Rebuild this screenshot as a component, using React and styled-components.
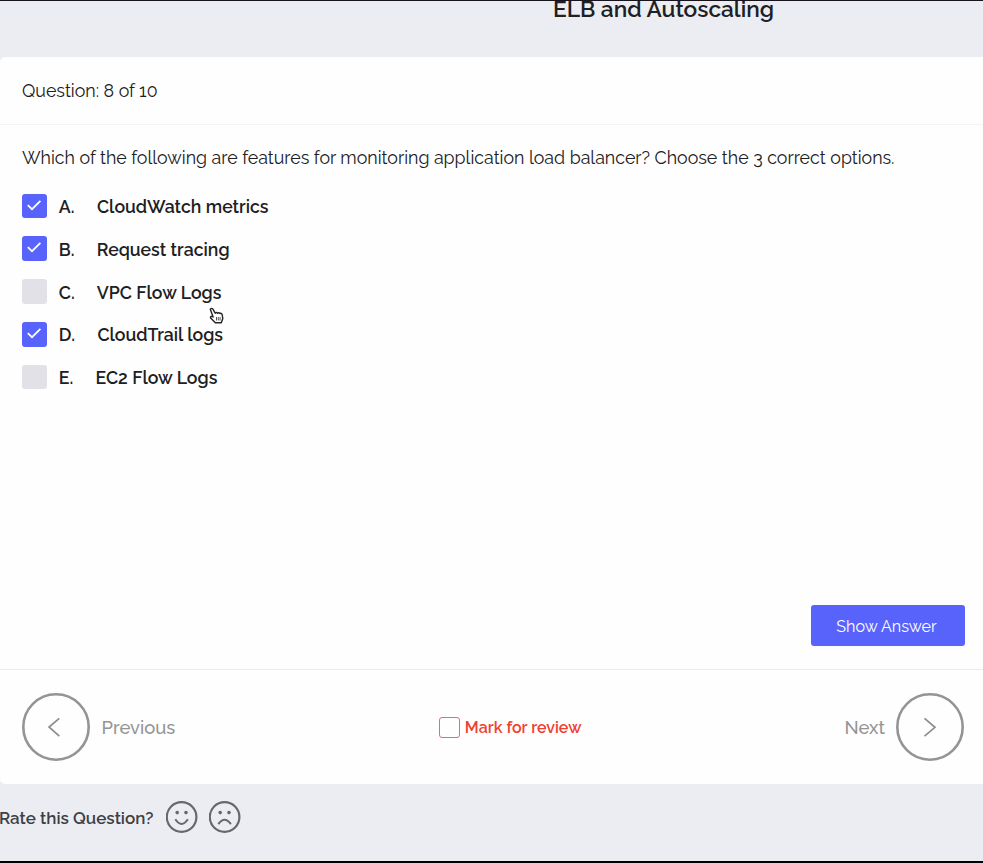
import React from "react";
import styled, { createGlobalStyle } from "styled-components";

const GlobalStyle = createGlobalStyle`
  *, *::before, *::after { box-sizing: border-box; }
  body {
    margin: 0;
    background: #ecedf3;
    color: #202022;
    font-family: Raleway, Lato, "Open Sans", sans-serif;
    overflow: hidden;
  }
`;

const Page = styled.div`
  display: flex;
  flex-direction: column;
  width: 983px;
  height: 863px;
  border-top: 1px solid #17121c;
  border-bottom: 2px solid #000;
`;

const TitleBar = styled.header`
  display: flex;
  flex: 0 0 56px;
  padding-left: 553px;
`;

const Title = styled.h1`
  margin: 0;
  font-size: 22.7px;
  line-height: 17px;
  font-weight: 600;
  white-space: nowrap;
`;

const Card = styled.main`
  display: flex;
  flex-direction: column;
  flex: 0 0 727px;
  background: #fefefe;
  border-radius: 5px 0 0 5px;
`;

const CardHeader = styled.div`
  display: flex;
  align-items: center;
  flex: 0 0 68px;
  padding: 0 22px;
  border-bottom: 1px solid #f3f3f4;
  font-size: 17.8px;
`;

const CardBody = styled.section`
  display: flex;
  flex-direction: column;
  flex: 1;
  padding: 20px 18px 23px 22px;
`;

const Prompt = styled.p`
  margin: 0;
  font-size: 17.8px;
  line-height: 26px;
  white-space: nowrap;
`;

const OptionList = styled.ul`
  display: flex;
  flex-direction: column;
  gap: 18.2px;
  margin: 22.6px 0 0;
  padding: 0;
  list-style: none;
`;

const OptionRow = styled.li`
  display: flex;
  align-items: center;
  height: 24.6px;
  font-size: 17.7px;
  font-weight: 600;
`;

const CheckBox = styled.span`
  display: flex;
  justify-content: center;
  width: 24.6px;
  height: 24.6px;
  margin-right: 12.2px;
  border-radius: 3px;
  background: ${(p) => (p.$checked ? "#5763fa" : "#e1e1e7")};
`;

const OptionLetter = styled.span`
  width: ${(p) => p.$width}px;
  padding-top: 1.4px;
`;

const OptionText = styled.span`
  padding-top: 1.4px;
`;

const ShowAnswer = styled.button`
  align-self: flex-end;
  width: 154px;
  height: 41px;
  margin-top: auto;
  padding: 2px 3px 0 0;
  border: 0;
  border-radius: 3px;
  background: #5763fa;
  color: #fff;
  font: 400 16.1px Raleway, Lato, sans-serif;
`;

const CardFooter = styled.nav`
  display: flex;
  align-items: center;
  justify-content: space-between;
  flex: 0 0 115px;
  padding: 0 18.5px 0 22px;
  border-top: 1px solid #ebebed;
`;

const NavItem = styled.div`
  display: flex;
  align-items: center;
  gap: 11.5px;
  color: #949494;
  font-size: 18.4px;
  font-weight: 500;
`;

const Review = styled.label`
  display: flex;
  align-items: center;
  gap: 4.5px;
  margin-left: 1px;
  color: #f0402f;
  font-size: 16px;
  font-weight: 600;
`;

const ReviewBox = styled.span`
  width: 21px;
  height: 21px;
  border: 1px solid #ee6a62;
  border-radius: 3px;
`;

const Rating = styled.footer`
  display: flex;
  align-items: center;
  flex: 1;
  padding-bottom: 11px;
  color: #3f3f44;
  font-size: 17px;
  font-weight: 600;
`;

const RatingLabel = styled.span`
  width: 155px;
  margin: 0 11.5px 0 -1px;
  padding-top: 1px;
  white-space: nowrap;
`;

const FaceButton = styled.span`
  display: flex;
  margin-right: 11px;
`;

const Pointer = styled.svg`
  position: absolute;
  left: 209px;
  top: 307px;
`;

const options = [
  { letter: "A.", text: "CloudWatch metrics", checked: true, width: 38.2 },
  { letter: "B.", text: "Request tracing", checked: true, width: 38 },
  { letter: "C.", text: "VPC Flow Logs", checked: false, width: 38 },
  { letter: "D.", text: "CloudTrail logs", checked: true, width: 38.6 },
  { letter: "E.", text: "EC2 Flow Logs", checked: false, width: 36.8 },
];

const Tick = () => (
  <svg width="24" height="24" viewBox="0 0 24 24" fill="none" stroke="#fff" strokeWidth="1.8">
    <path d="M5.8 11.2l4.2 4 8.4-8.4" />
  </svg>
);

const CircleArrow = ({ left }) => (
  <svg width="68" height="68" viewBox="0 0 68 68" fill="none" stroke="#949494">
    <circle cx="34" cy="34" r="32.7" strokeWidth="2.6" />
    <path
      d={left ? "M37.3 25.3L27 34L37.3 43.2" : "M28.5 25.3L39 34.3L28.5 43.2"}
      stroke="#8d8d8d"
      strokeWidth="1.7"
    />
  </svg>
);

const Face = ({ sad }) => (
  <FaceButton>
    <svg width="32" height="32" viewBox="0 0 32 32" fill="none" stroke="#68686b" strokeWidth="2.2">
      <circle cx="15.6" cy="16" r="14.8" />
      <circle cx="11.2" cy="11.6" r="1.8" fill="#68686b" stroke="none" />
      <circle cx="20" cy="11.6" r="1.8" fill="#68686b" stroke="none" />
      <path d={sad ? "M9.3 23.2Q15.6 14.5 21.9 23.2" : "M9.3 18.2Q15.6 27.6 21.9 18.2"} strokeWidth="2" />
    </svg>
  </FaceButton>
);

export default function App() {
  return (
    <Page>
      <GlobalStyle />
      <TitleBar>
        <Title>ELB and Autoscaling</Title>
      </TitleBar>
      <Card>
        <CardHeader>Question: 8 of 10</CardHeader>
        <CardBody>
          <Prompt>
            Which of the following are features for monitoring application load balancer? Choose the 3 correct options.
          </Prompt>
          <OptionList>
            {options.map(({ letter, text, checked, width }) => (
              <OptionRow key={letter}>
                <CheckBox $checked={checked}>{checked && <Tick />}</CheckBox>
                <OptionLetter $width={width}>{letter}</OptionLetter>
                <OptionText>{text}</OptionText>
              </OptionRow>
            ))}
          </OptionList>
          <ShowAnswer>Show Answer</ShowAnswer>
        </CardBody>
        <CardFooter>
          <NavItem>
            <CircleArrow left />
            Previous
          </NavItem>
          <Review>
            <ReviewBox />
            Mark for review
          </Review>
          <NavItem>
            Next
            <CircleArrow />
          </NavItem>
        </CardFooter>
      </Card>
      <Rating>
        <RatingLabel>Rate this Question?</RatingLabel>
        <Face />
        <Face sad />
      </Rating>
      <Pointer width="16" height="18" viewBox="0 0 16 18">
        <path
          d="M1.3 2.2Q2.5 .6 3.9 2.1L6.2 6.2Q7.4 4.9 8.6 6.2Q9.9 5.2 11 6.5Q12.5 5.9 13.2 7.6L13.8 11.5L12.3 15.8H6.4L1.6 11.1Q1 9.3 3 9.2L4.1 10Z"
          fill="#fff"
          stroke="#242424"
          strokeWidth="1.4"
          strokeLinejoin="round"
        />
        <path d="M7.5 10v3.5M9.3 10v3.5M11.1 10v3.5" stroke="#444" strokeWidth=".9" />
      </Pointer>
    </Page>
  );
}
